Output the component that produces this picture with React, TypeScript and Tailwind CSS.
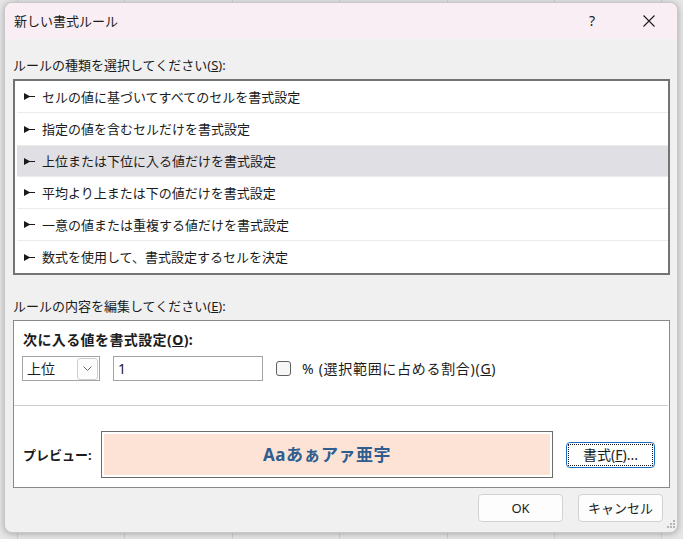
import React from "react";

const FONT = "font-['Noto_Sans','Noto_Sans_CJK_JP',sans-serif]";

function Bullet() {
  return (
    <svg width="11" height="7" viewBox="0 0 11 7" className="shrink-0">
      <path d="M0 0 L5.5 3 L11 3 L11 4 L5.5 4 L0 7 Z" fill="#1a1a1a" />
    </svg>
  );
}

const rules = [
  "セルの値に基づいてすべてのセルを書式設定",
  "指定の値を含むセルだけを書式設定",
  "上位または下位に入る値だけを書式設定",
  "平均より上または下の値だけを書式設定",
  "一意の値または重複する値だけを書式設定",
  "数式を使用して、書式設定するセルを決定",
];

export default function App() {
  return (
    <div
      className={`${FONT} w-[683px] h-[539px] overflow-hidden bg-[#e6e6e6] bg-[repeating-linear-gradient(90deg,transparent_0px,transparent_17px,#d2d2d2_17px,#d2d2d2_18px,transparent_18px,transparent_107.4px)] pt-[2px] pl-[4px] text-[#1b1b1b]`}
    >
      <div className="relative w-[674px] h-[531px] rounded-[8px] bg-[#f0f0f0] flex flex-col overflow-hidden shadow-[0_1px_6px_rgba(0,0,0,0.28)] border border-[#c9c9c9]">
        {/* Title bar */}
        <div className="h-[36px] shrink-0 bg-[#f9eef3] flex items-center pl-[9px]">
          <span className="text-[13px] leading-[18px]">新しい書式ルール</span>
          <span className="ml-auto mr-[48px] text-[14px] leading-[18px]">?</span>
          <svg width="12" height="12" viewBox="0 0 12 12" className="mr-[22px]">
            <path d="M0.5 0.5 L11.5 11.5 M11.5 0.5 L0.5 11.5" stroke="#1b1b1b" strokeWidth="1.1" />
          </svg>
        </div>

        {/* Body */}
        <div className="flex flex-col pl-[8px] pr-[7px]">
          <div className="mt-[17px] mb-[5px] text-[13px] leading-[18px]">
            ルールの種類を選択してください(<span className="underline">S</span>):
          </div>
          <div className="h-[196px] border-2 border-[#737373] bg-white pl-[2px]">
            {rules.map((r, i) => (
              <div
                key={r}
                className={`h-[32px] flex items-center gap-[7px] pl-[7px] ${
                  i === 2 ? "bg-[#e0dfe3] border-y border-[#ebebeb]" : i < 5 ? "border-b border-[#ebebeb]" : ""
                } ${i === 1 ? "border-b-0" : ""}`}
              >
                <Bullet />
                <span className="text-[13px] leading-[18px]">{r}</span>
              </div>
            ))}
          </div>

          <div className="mt-[22px] mb-[5px] text-[13px] leading-[18px]">
            ルールの内容を編集してください(<span className="underline">E</span>):
          </div>

          <div className="h-[168px] border border-[#8a8a8a] bg-white flex flex-col">
            <div className="pt-[10px] pl-[9px] font-bold text-[14px] leading-[18px] tracking-[0.4px]">
              次に入る値を書式設定(<span className="underline">O</span>):
            </div>
            <div className="mt-[7px] pl-[8px] flex items-center h-[25px]">
              <div className="w-[78px] h-[25px] border border-[#a5a5a5] bg-white flex items-center pl-[4px] pr-[1px]">
                <span className="text-[14px] leading-[18px]">上位</span>
                <div className="ml-auto w-[21px] h-[22px] border border-[#cfcfcf] rounded-[3px] bg-[#fdfdfd] flex items-center justify-center">
                  <svg width="9" height="5" viewBox="0 0 9 5">
                    <path d="M0.5 0.5 L4.5 4.5 L8.5 0.5" fill="none" stroke="#5a5a5a" strokeWidth="0.9" />
                  </svg>
                </div>
              </div>
              <div className="ml-[13px] w-[150px] h-[25px] border border-[#a5a5a5] bg-white flex items-center pl-[4px]">
                <span className="text-[14px] leading-[18px]">1</span>
              </div>
              <div className="ml-[13px] w-[15px] h-[15px] rounded-[3px] border border-[#616161] bg-[#f7f7f7]" />
              <span className="ml-[11px] text-[14px] leading-[18px] tracking-[0.7px]">
                % (選択範囲に占める割合)(<span className="underline">G</span>)
              </span>
            </div>
            <div className="mt-[24px] h-px bg-[#cfcfcf] mr-[1px]" />
            <div className="flex items-center pt-[25px] pl-[9px]">
              <span className="font-bold text-[13px] leading-[18px] w-[78px]">プレビュー:</span>
              <div className="w-[452px] h-[47px] border border-[#6c6c6c] bg-white p-[2px]">
                <div className="w-full h-full bg-[#fce3d6] flex items-center justify-center">
                  <span className="font-bold text-[17px] leading-[20px] tracking-[0.5px] text-[#2f5d8f]">Aaあぁアァ亜宇</span>
                </div>
              </div>
              <div className="ml-[13px] w-[89px] h-[26px] border border-[#1a6fc4] rounded-[4px] bg-white p-[1px]">
                <div className="w-full h-full border border-dotted border-[#1b1b1b] flex items-center justify-center text-[14px] leading-[18px]">
                  書式(<span className="underline">F</span>)...
                </div>
              </div>
            </div>
          </div>

          <div className="mt-[6px] flex justify-end gap-[15px] pr-[7px]">
            <div className="w-[85px] h-[28px] rounded-[4px] border border-[#d2d2d2] bg-[#fdfdfd] flex items-center justify-center text-[13px] leading-[18px]">
              OK
            </div>
            <div className="w-[85px] h-[28px] rounded-[4px] border border-[#d2d2d2] bg-[#fdfdfd] flex items-center justify-center text-[13px] leading-[18px]">
              キャンセル
            </div>
          </div>
        </div>

        {/* resize grip */}
        <svg width="10" height="10" viewBox="0 0 10 10" className="absolute right-[1px] bottom-[3px]">
          <rect x="7" y="1" width="2" height="2" fill="#b5b5b5" />
          <rect x="4" y="4" width="2" height="2" fill="#b5b5b5" />
          <rect x="7" y="4" width="2" height="2" fill="#b5b5b5" />
          <rect x="1" y="7" width="2" height="2" fill="#b5b5b5" />
          <rect x="4" y="7" width="2" height="2" fill="#b5b5b5" />
          <rect x="7" y="7" width="2" height="2" fill="#b5b5b5" />
        </svg>
      </div>
    </div>
  );
}
